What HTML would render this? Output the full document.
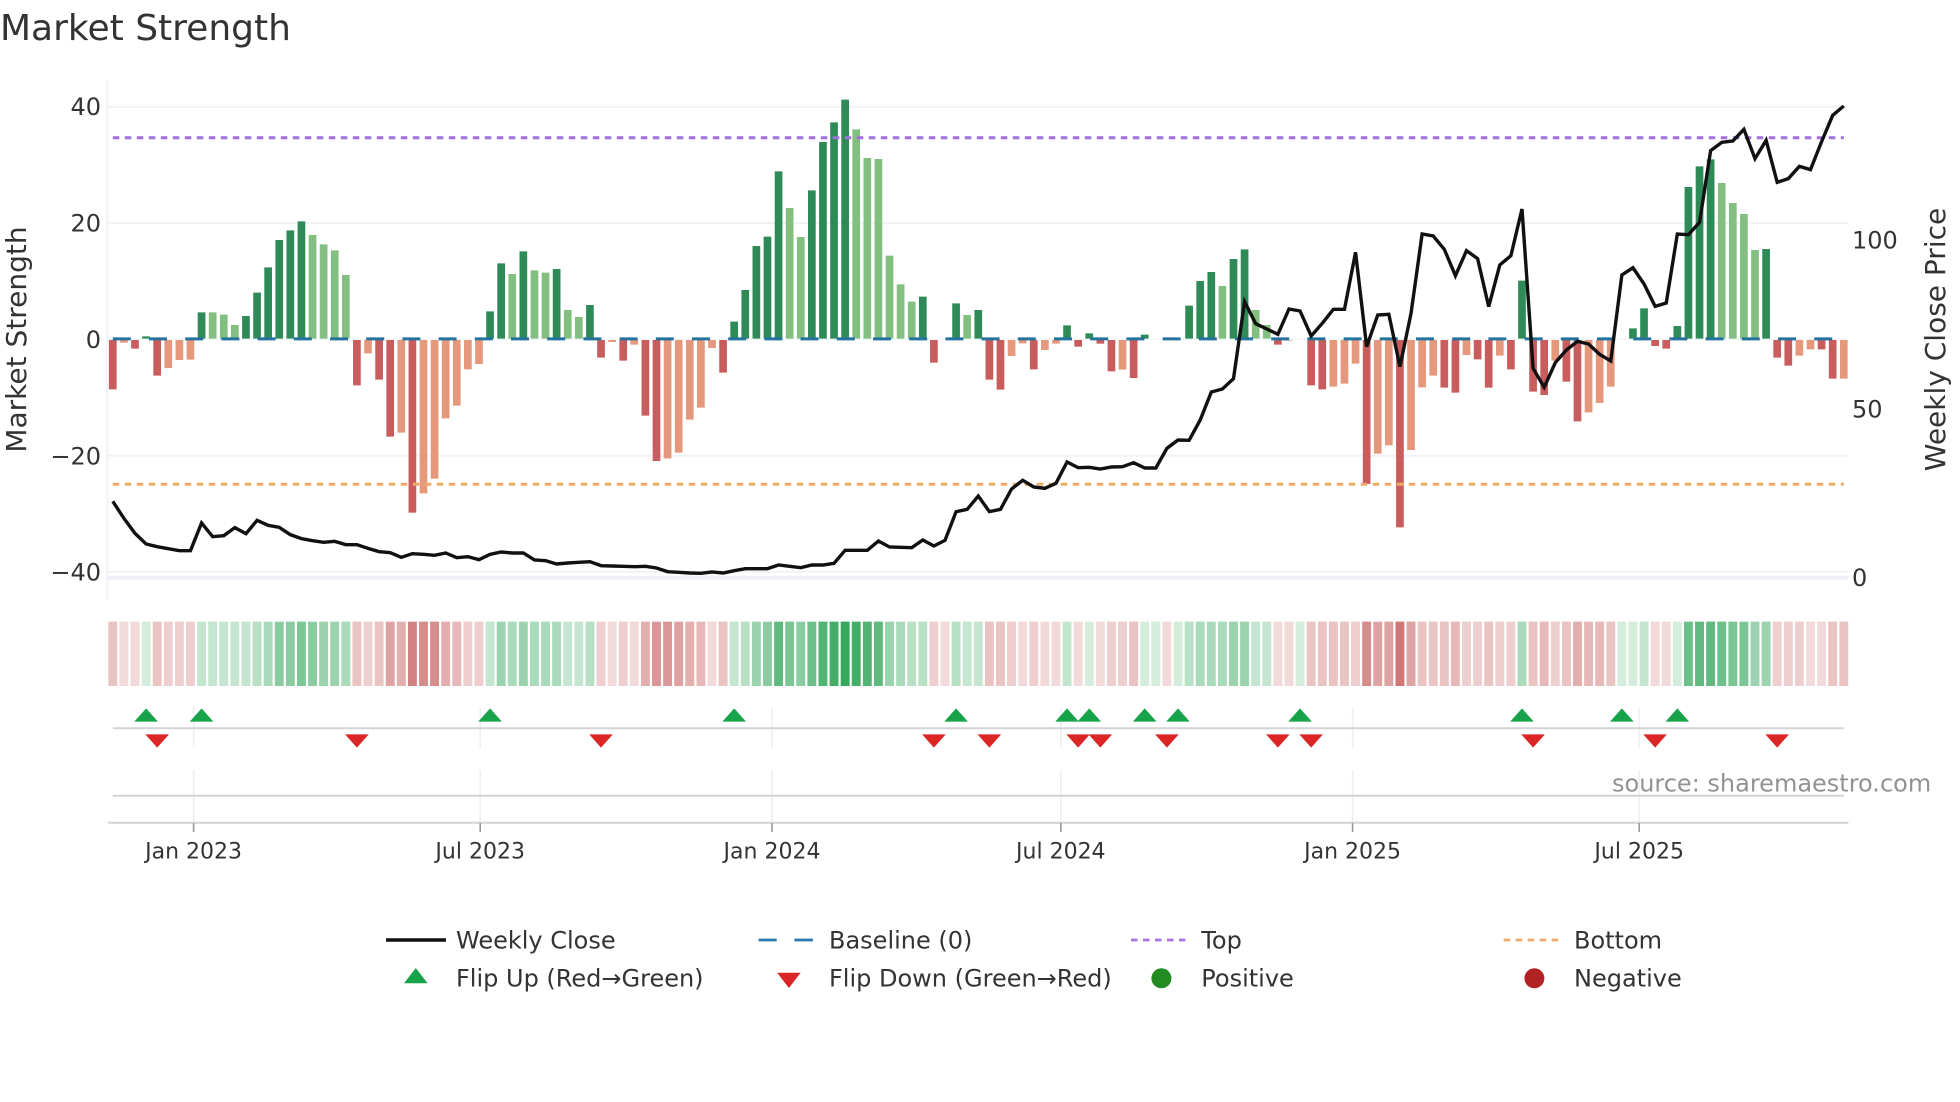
<!DOCTYPE html>
<html><head><meta charset="utf-8"><title>Market Strength</title>
<style>
html,body{margin:0;padding:0;background:#fff;width:1960px;height:1102px;overflow:hidden}
svg{display:block}
text{font-family:"DejaVu Sans","Liberation Sans",sans-serif;fill:#333;font-size:24px}
.i path,.i polyline{vector-effect:non-scaling-stroke;fill:none}
</style></head><body>
<svg width="1960" height="1102" viewBox="0 0 1960 1102" xmlns="http://www.w3.org/2000/svg">
<rect width="1960" height="1102" fill="#fff"/>
<text x="0" y="40" style="font-size:36px">Market Strength</text>
<g stroke="#f1f2f5" stroke-width="2" fill="none">
<path d="M107.3 80V599"/>
<path d="M107 106.7H1848M107 223H1848M107 455.7H1848M107 571.7H1848"/>
</g>
<path d="M107 577.7H1848" stroke="#eff0f7" stroke-width="4"/>
<g class="i" transform="translate(112.8 0) scale(11.096 .33333)" fill="none">
<path stroke="#2e8b57" stroke-width="7.7" d="M3 1018V1009M8 1018V937M12 1018V948M13 1018V878M14 1018V802M15 1018V720M16 1018V691M17 1018V664M34 1018V934M35 1018V790M37 1018V754M40 1018V807M43 1018V915M56 1018V965M57 1018V870M58 1018V738M59 1018V710M60 1018V514M63 1018V571M64 1018V426M65 1018V367M66 1018V299M73 1018V890M76 1018V910M78 1018V930M86 1018V976M88 1018V1000M93 1018V1004M97 1018V917M98 1018V843M99 1018V816M101 1018V777M102 1018V748M127 1018V842M137 1018V985M138 1018V925M141 1018V978M142 1018V561M143 1018V499M144 1018V478M149 1018V747"/>
<path stroke="#82bf80" stroke-width="7.7" d="M9 1018V937M10 1018V944M11 1018V975M18 1018V705M19 1018V733M20 1018V751M21 1018V825M36 1018V822M38 1018V811M39 1018V818M41 1018V930M42 1018V951M61 1018V624M62 1018V711M67 1018V388M68 1018V474M69 1018V477M70 1018V767M71 1018V853M72 1018V905M77 1018V945M100 1018V858M103 1018V930M104 1018V975M145 1018V549M146 1018V609M147 1018V642M148 1018V750"/>
<path stroke="#c95d5d" stroke-width="7.7" d="M0 1018V1168M2 1018V1046M4 1018V1127M22 1018V1156M24 1018V1139M25 1018V1310M27 1018V1538M44 1018V1073M46 1018V1082M48 1018V1247M49 1018V1383M55 1018V1118M74 1018V1088M79 1018V1139M80 1018V1169M83 1018V1108M87 1018V1040M89 1018V1031M90 1018V1114M92 1018V1134M105 1018V1034M108 1018V1156M109 1018V1168M113 1018V1452M116 1018V1582M120 1018V1163M121 1018V1178M123 1018V1078M124 1018V1163M126 1018V1108M128 1018V1175M129 1018V1185M131 1018V1145M132 1018V1264M139 1018V1038M140 1018V1046M150 1018V1073M151 1018V1097M154 1018V1048M155 1018V1136"/>
<path stroke="#e5987b" stroke-width="7.7" d="M1 1018V1028M5 1018V1104M6 1018V1080M7 1018V1079M23 1018V1060M26 1018V1298M28 1018V1480M29 1018V1436M30 1018V1255M31 1018V1217M32 1018V1108M33 1018V1092M45 1018V1026M47 1018V1034M50 1018V1375M51 1018V1358M52 1018V1259M53 1018V1223M54 1018V1044M81 1018V1068M82 1018V1030M84 1018V1050M85 1018V1031M91 1018V1109M106 1018V1022M110 1018V1160M111 1018V1151M112 1018V1091M114 1018V1361M115 1018V1336M117 1018V1350M118 1018V1162M119 1018V1127M122 1018V1065M125 1018V1067M130 1018V1082M133 1018V1237M134 1018V1209M135 1018V1160M152 1018V1067M153 1018V1048M156 1018V1136"/>
</g>
<path d="M107 339.3H1848" stroke="#eef7f7" stroke-width="1.4"/>
<path d="M112.8 338.9H1843.8" stroke="#26729f" stroke-width="3" stroke-dasharray="18 18.2" fill="none"/>
<path d="M112.8 137.7H1843.8" stroke="#a26fe0" stroke-width="3" stroke-dasharray="6.5 5.5" fill="none"/>
<path d="M112.8 484.3H1843.8" stroke="#f0a968" stroke-width="3" stroke-dasharray="6.5 5.5" fill="none"/>
<g class="i" transform="translate(112.8 0) scale(11.096 .33333)">
<polyline stroke="#111" stroke-width="3.4" stroke-linejoin="miter" points="0,1504 1,1555 2,1600 3,1632 4,1640 5,1646 6,1652 7,1652 8,1569 9,1610 10,1607 11,1583 12,1601 13,1561 14,1576 15,1582 16,1604 17,1616 18,1622 19,1627 20,1624 21,1634 22,1634 23,1645 24,1655 25,1658 26,1672 27,1661 28,1663 29,1666 30,1659 31,1673 32,1670 33,1679 34,1663 35,1656 36,1659 37,1659 38,1680 39,1682 40,1692 41,1689 42,1687 43,1685 44,1697 45,1698 46,1699 47,1700 48,1699 49,1704 50,1715 51,1717 52,1719 53,1720 54,1716 55,1719 56,1712 57,1706 58,1706 59,1706 60,1695 61,1699 62,1703 63,1695 64,1695 65,1690 66,1651 67,1651 68,1651 69,1623 70,1641 71,1642 72,1643 73,1620 74,1638 75,1621 76,1535 77,1528 78,1488 79,1535 80,1528 81,1467 82,1441 83,1461 84,1465 85,1450 86,1386 87,1403 88,1402 89,1407 90,1401 91,1400 92,1388 93,1404 94,1404 95,1345 96,1320 97,1321 98,1260 99,1176 100,1167 101,1136 102,905 103,971 104,987 105,1003 106,927 107,933 108,1008 109,970 110,928 111,928 112,757 113,1040 114,945 115,943 116,1100 117,940 118,702 119,708 120,748 121,827 122,752 123,776 124,920 125,795 126,767 127,627 128,1105 129,1162 130,1088 131,1050 132,1024 133,1032 134,1063 135,1083 136,825 137,803 138,852 139,919 140,909 141,702 142,704 143,667 144,452 145,427 146,423 147,388 148,476 149,421 150,547 151,536 152,499 153,509 154,425 155,346 156,318"/>
<g stroke="#b22222" stroke-width="8.9">
<path stroke-opacity=".17" d="M1 1865v193M2 1865v193M45 1865v193M47 1865v193M54 1865v193M75 1865v193M82 1865v193M84 1865v193M85 1865v193M87 1865v193M89 1865v193M95 1865v193M105 1865v193M106 1865v193M139 1865v193M140 1865v193M153 1865v193M154 1865v193"/>
<path stroke-opacity=".22" d="M5 1865v193M6 1865v193M7 1865v193M23 1865v193M32 1865v193M33 1865v193M44 1865v193M46 1865v193M74 1865v193M81 1865v193M83 1865v193M90 1865v193M91 1865v193M112 1865v193M122 1865v193M123 1865v193M125 1865v193M126 1865v193M130 1865v193M150 1865v193M151 1865v193M152 1865v193"/>
<path stroke-opacity=".27" d="M0 1865v193M4 1865v193M22 1865v193M24 1865v193M55 1865v193M79 1865v193M80 1865v193M92 1865v193M108 1865v193M109 1865v193M110 1865v193M111 1865v193M118 1865v193M119 1865v193M120 1865v193M124 1865v193M128 1865v193M131 1865v193M135 1865v193M155 1865v193M156 1865v193"/>
<path stroke-opacity=".32" d="M31 1865v193M53 1865v193M121 1865v193M129 1865v193M133 1865v193M134 1865v193"/>
<path stroke-opacity=".37" d="M26 1865v193M30 1865v193M48 1865v193M52 1865v193M132 1865v193"/>
<path stroke-opacity=".42" d="M25 1865v193M51 1865v193M114 1865v193M115 1865v193M117 1865v193"/>
<path stroke-opacity=".47" d="M49 1865v193M50 1865v193"/>
<path stroke-opacity=".52" d="M28 1865v193M29 1865v193M113 1865v193"/>
<path stroke-opacity=".57" d="M27 1865v193"/>
<path stroke-opacity=".62" d="M116 1865v193"/>
</g>
<g stroke="#159a42" stroke-width="8.9">
<path stroke-opacity=".18" d="M3 1865v193M88 1865v193M93 1865v193M94 1865v193M96 1865v193M107 1865v193M136 1865v193M137 1865v193M141 1865v193"/>
<path stroke-opacity=".25" d="M8 1865v193M9 1865v193M10 1865v193M11 1865v193M12 1865v193M34 1865v193M41 1865v193M42 1865v193M56 1865v193M77 1865v193M78 1865v193M86 1865v193M103 1865v193M104 1865v193M138 1865v193"/>
<path stroke-opacity=".31" d="M13 1865v193M43 1865v193M57 1865v193M72 1865v193M73 1865v193M76 1865v193M97 1865v193"/>
<path stroke-opacity=".37" d="M14 1865v193M21 1865v193M36 1865v193M38 1865v193M39 1865v193M40 1865v193M71 1865v193M98 1865v193M99 1865v193M100 1865v193M127 1865v193"/>
<path stroke-opacity=".43" d="M19 1865v193M20 1865v193M35 1865v193M37 1865v193M58 1865v193M70 1865v193M101 1865v193M102 1865v193M148 1865v193M149 1865v193"/>
<path stroke-opacity=".5" d="M15 1865v193M16 1865v193M18 1865v193M59 1865v193M62 1865v193"/>
<path stroke-opacity=".56" d="M17 1865v193M61 1865v193M146 1865v193M147 1865v193"/>
<path stroke-opacity=".62" d="M63 1865v193M142 1865v193M145 1865v193"/>
<path stroke-opacity=".68" d="M60 1865v193M69 1865v193M143 1865v193M144 1865v193"/>
<path stroke-opacity=".74" d="M64 1865v193M68 1865v193"/>
<path stroke-opacity=".8" d="M65 1865v193M67 1865v193"/>
<path stroke-opacity=".86" d="M66 1865v193"/>
</g>
</g>
<g stroke="#eceff3" stroke-width="1.6" fill="none">
<path d="M193.6 708V748M193.6 770V822M480.2 708V748M480.2 770V822M772 708V748M772 770V822M1060.8 708V748M1060.8 770V822M1352.6 708V748M1352.6 770V822M1639.2 708V748M1639.2 770V822"/>
</g>
<path d="M112.8 728.3H1843.8M112.8 795.7H1843.8M108 822.7H1848.4" stroke="#d4d4d6" stroke-width="2" fill="none"/>
<path d="M193.6 823V832M480.2 823V832M772 823V832M1060.8 823V832M1352.6 823V832M1639.2 823V832" stroke="#999" stroke-width="1.6" fill="none"/>
<g transform="translate(112.8 0) scale(11.096 .33333)">
<path fill="#16a34a" d="M3 2125l1.065 40h-2.13zM8 2125l1.065 40h-2.13zM34 2125l1.065 40h-2.13zM56 2125l1.065 40h-2.13zM76 2125l1.065 40h-2.13zM86 2125l1.065 40h-2.13zM88 2125l1.065 40h-2.13zM93 2125l1.065 40h-2.13zM96 2125l1.065 40h-2.13zM107 2125l1.065 40h-2.13zM127 2125l1.065 40h-2.13zM136 2125l1.065 40h-2.13zM141 2125l1.065 40h-2.13z"/>
<path fill="#dc2626" d="M4 2243l1.065-40h-2.13zM22 2243l1.065-40h-2.13zM44 2243l1.065-40h-2.13zM74 2243l1.065-40h-2.13zM79 2243l1.065-40h-2.13zM87 2243l1.065-40h-2.13zM89 2243l1.065-40h-2.13zM95 2243l1.065-40h-2.13zM105 2243l1.065-40h-2.13zM108 2243l1.065-40h-2.13zM128 2243l1.065-40h-2.13zM139 2243l1.065-40h-2.13zM150 2243l1.065-40h-2.13z"/>
</g>
<g text-anchor="end">
<text x="101" y="115">40</text>
<text x="101" y="231.5">20</text>
<text x="101" y="348">0</text>
<text x="101" y="464.5">−20</text>
<text x="101" y="580.5">−40</text>
</g>
<text x="1852" y="248.3">100</text>
<text x="1852" y="417.3">50</text>
<text x="1852" y="586">0</text>
<text transform="translate(26 339.5) rotate(-90)" text-anchor="middle" style="font-size:28px">Market Strength</text>
<text transform="translate(1945 339.5) rotate(-90)" text-anchor="middle" style="font-size:28px">Weekly Close Price</text>
<g text-anchor="middle">
<text x="193.6" y="858.3" style="font-size:22px">Jan 2023</text>
<text x="480.2" y="858.3" style="font-size:22px">Jul 2023</text>
<text x="772" y="858.3" style="font-size:22px">Jan 2024</text>
<text x="1060.8" y="858.3" style="font-size:22px">Jul 2024</text>
<text x="1352.6" y="858.3" style="font-size:22px">Jan 2025</text>
<text x="1639.2" y="858.3" style="font-size:22px">Jul 2025</text>
</g>
<text x="1612" y="791.5" style="fill:#8c8c8c;fill-opacity:.95">source: sharemaestro.com</text>
<path d="M386 940H446" stroke="#111" stroke-width="3.6"/>
<path d="M758.6 940H776.7M794.4 940H812.9" stroke="#2a7ab0" stroke-width="2.8"/>
<path d="M1131 940H1185.4" stroke="#a974e6" stroke-width="2.8" stroke-dasharray="6.5 5.5"/>
<path d="M1503.7 940H1558.4" stroke="#f0a968" stroke-width="2.8" stroke-dasharray="6.5 5.5"/>
<path fill="#16a34a" d="M415.8 968L427.6 983.3H404z"/>
<path fill="#dc2626" d="M788.9 988L800.7 972.7H777.1z"/>
<circle cx="1161.4" cy="978.3" r="10" fill="#228b22"/>
<circle cx="1534.4" cy="978.3" r="10" fill="#b22222"/>
<text x="456" y="948.3">Weekly Close</text>
<text x="829" y="948.3">Baseline (0)</text>
<text x="1201.3" y="948.3">Top</text>
<text x="1574" y="948.3">Bottom</text>
<text x="456" y="986.7">Flip Up (Red→Green)</text>
<text x="829" y="986.7">Flip Down (Green→Red)</text>
<text x="1201.3" y="986.7">Positive</text>
<text x="1574" y="986.7">Negative</text>
</svg>
</body></html>
